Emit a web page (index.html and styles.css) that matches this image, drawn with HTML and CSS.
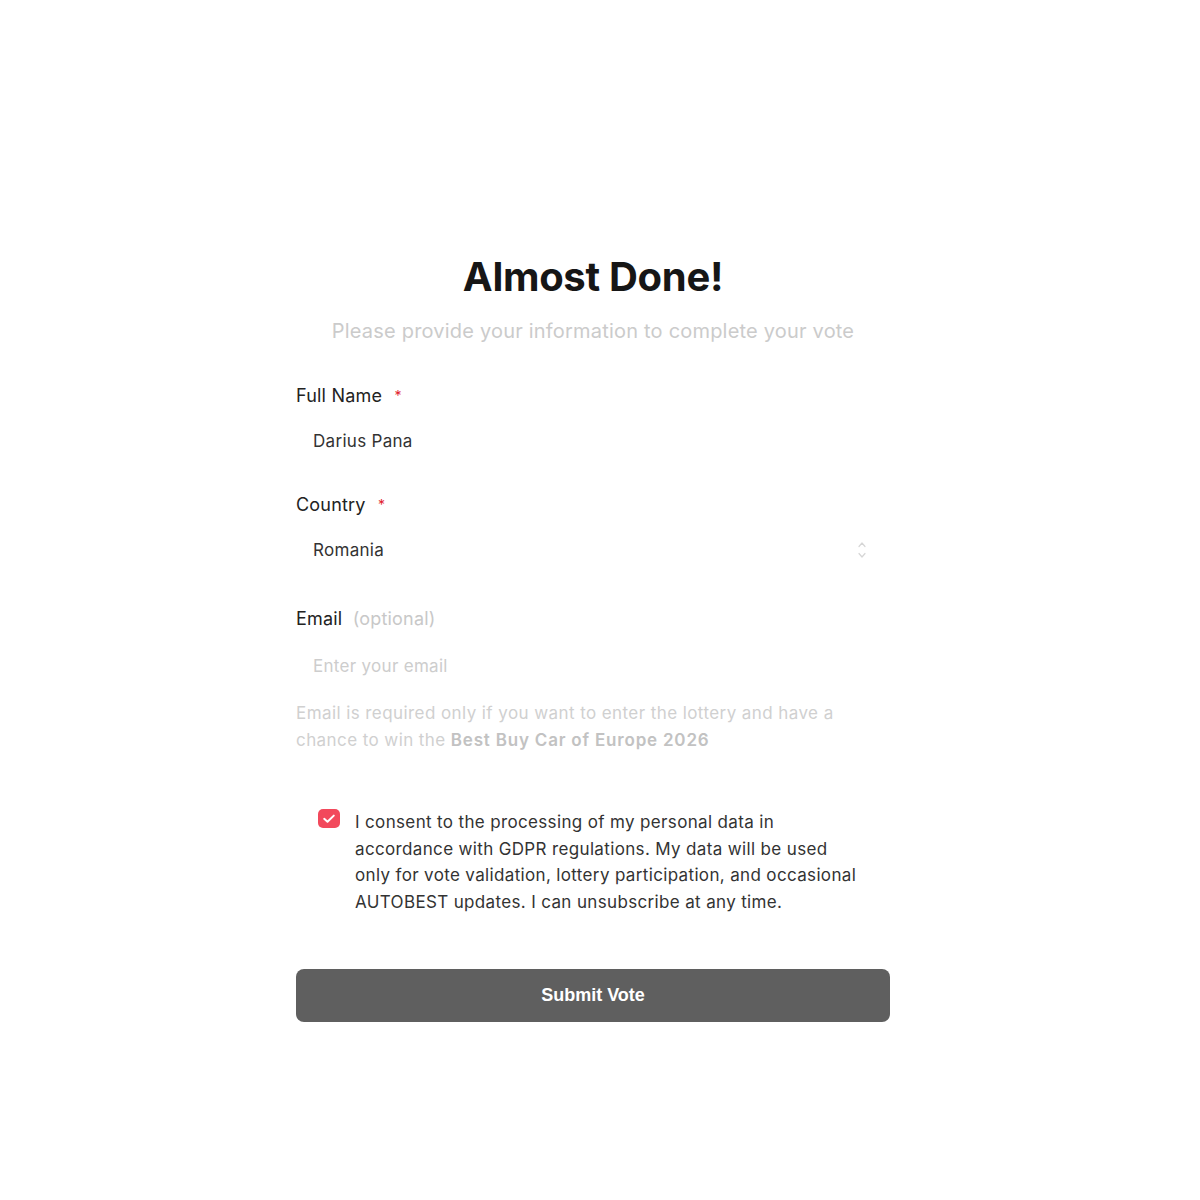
FILE: index.html
```html
<!DOCTYPE html>
<html>
<head>
<meta charset="utf-8">
<link rel="stylesheet" href="styles.css">
</head>
<body>
<main class="page">
  <section class="card">
    <h1 class="title">Almost Done!</h1>
    <p class="subtitle">Please provide your information to complete your vote</p>

    <div class="field field-name">
      <label class="label">Full Name <span class="req">*</span></label>
      <div class="input">Darius Pana</div>
    </div>

    <div class="field field-country">
      <label class="label">Country <span class="req">*</span></label>
      <div class="input select">
        <span>Romania</span>
        <svg class="chev" width="10" height="18" viewBox="0 0 10 18"><path d="M2 5.5 L5 2 L8 5.5 M2 12.5 L5 16 L8 12.5" fill="none" stroke="#d6d6d6" stroke-width="1.2" stroke-linecap="round" stroke-linejoin="round"/></svg>
      </div>
    </div>

    <div class="field field-email">
      <label class="label">Email <span class="opt">(optional)</span></label>
      <div class="input placeholder">Enter your email</div>
      <p class="help">Email is required only if you want to enter the lottery and have a chance to win the <strong>Best Buy Car of Europe 2026</strong></p>
    </div>

    <div class="consent">
      <span class="checkbox">
        <svg width="22" height="19" viewBox="0 0 22 19"><rect x="0" y="0" width="22" height="19" rx="5" fill="#f2495c"/><path d="M6.2 9.8 L9.5 12.8 L15.8 6.6" fill="none" stroke="#fff" stroke-width="2" stroke-linecap="round" stroke-linejoin="round"/></svg>
      </span>
      <p class="consent-text">I consent to the processing of my personal data in accordance with GDPR regulations. My data will be used only for vote validation, lottery participation, and occasional AUTOBEST updates. I can unsubscribe at any time.</p>
    </div>

    <button class="submit">Submit Vote</button>
  </section>
</main>
</body>
</html>
```

FILE: styles.css
```css
* { box-sizing: border-box; }
html, body { margin: 0; padding: 0; background: #fff; }
body { font-family: Inter, "Noto Sans", sans-serif; color: #222; }
.page { display: flex; justify-content: center; padding-top: 252px; padding-right: 14px; }
.card { width: 594px; display: flex; flex-direction: column; }
.title { margin: 0; text-align: center; font-size: 40px; font-weight: 700; line-height: 50px; color: #161616; letter-spacing: -0.3px; }
.subtitle { margin: 15px 0 0; text-align: center; font-size: 20px; line-height: 28px; color: #cbcbcb; font-weight: 400; letter-spacing: 0.2px; }
.field { display: flex; flex-direction: column; }
.field-name { margin-top: 40px; }
.field-country { margin-top: 29px; }
.field-email { margin-top: 34px; }
.label { font-size: 18px; line-height: 22px; color: #222; letter-spacing: 0.2px; }
.req { color: #e11d2e; margin-left: 7px; font-size: 14px; vertical-align: top; }
.opt { color: #c8c8c8; margin-left: 5px; }
.input { height: 48px; padding: 0 17px; display: flex; align-items: center; font-size: 17px; color: #333; margin-top: 10px; letter-spacing: 0.3px; }
.field-email .input { margin-top: 12px; }
.select { justify-content: space-between; padding-right: 23px; }
.chev { display: block; }
.placeholder { color: #cdcdcd; }
.help { margin: 10px 0 0; font-size: 17px; line-height: 27px; color: #d0d0d0; letter-spacing: 0.42px; }
.help strong { font-weight: 600; color: #c2c2c2; letter-spacing: 0.8px; }
.consent { display: flex; margin-top: 55px; padding-left: 22px; gap: 15px; }
.checkbox { flex: none; padding-top: 0; }
.checkbox svg { display: block; }
.consent-text { margin: 0; max-width: 512px; font-size: 17px; line-height: 26.5px; color: #333; letter-spacing: 0.35px; }
.submit { margin-top: 54px; height: 53px; border: 0; border-radius: 8px; background: #5f5f5f; color: #fff; font-family: "Liberation Sans", Arial, sans-serif; font-weight: 700; font-size: 18px; }
```
